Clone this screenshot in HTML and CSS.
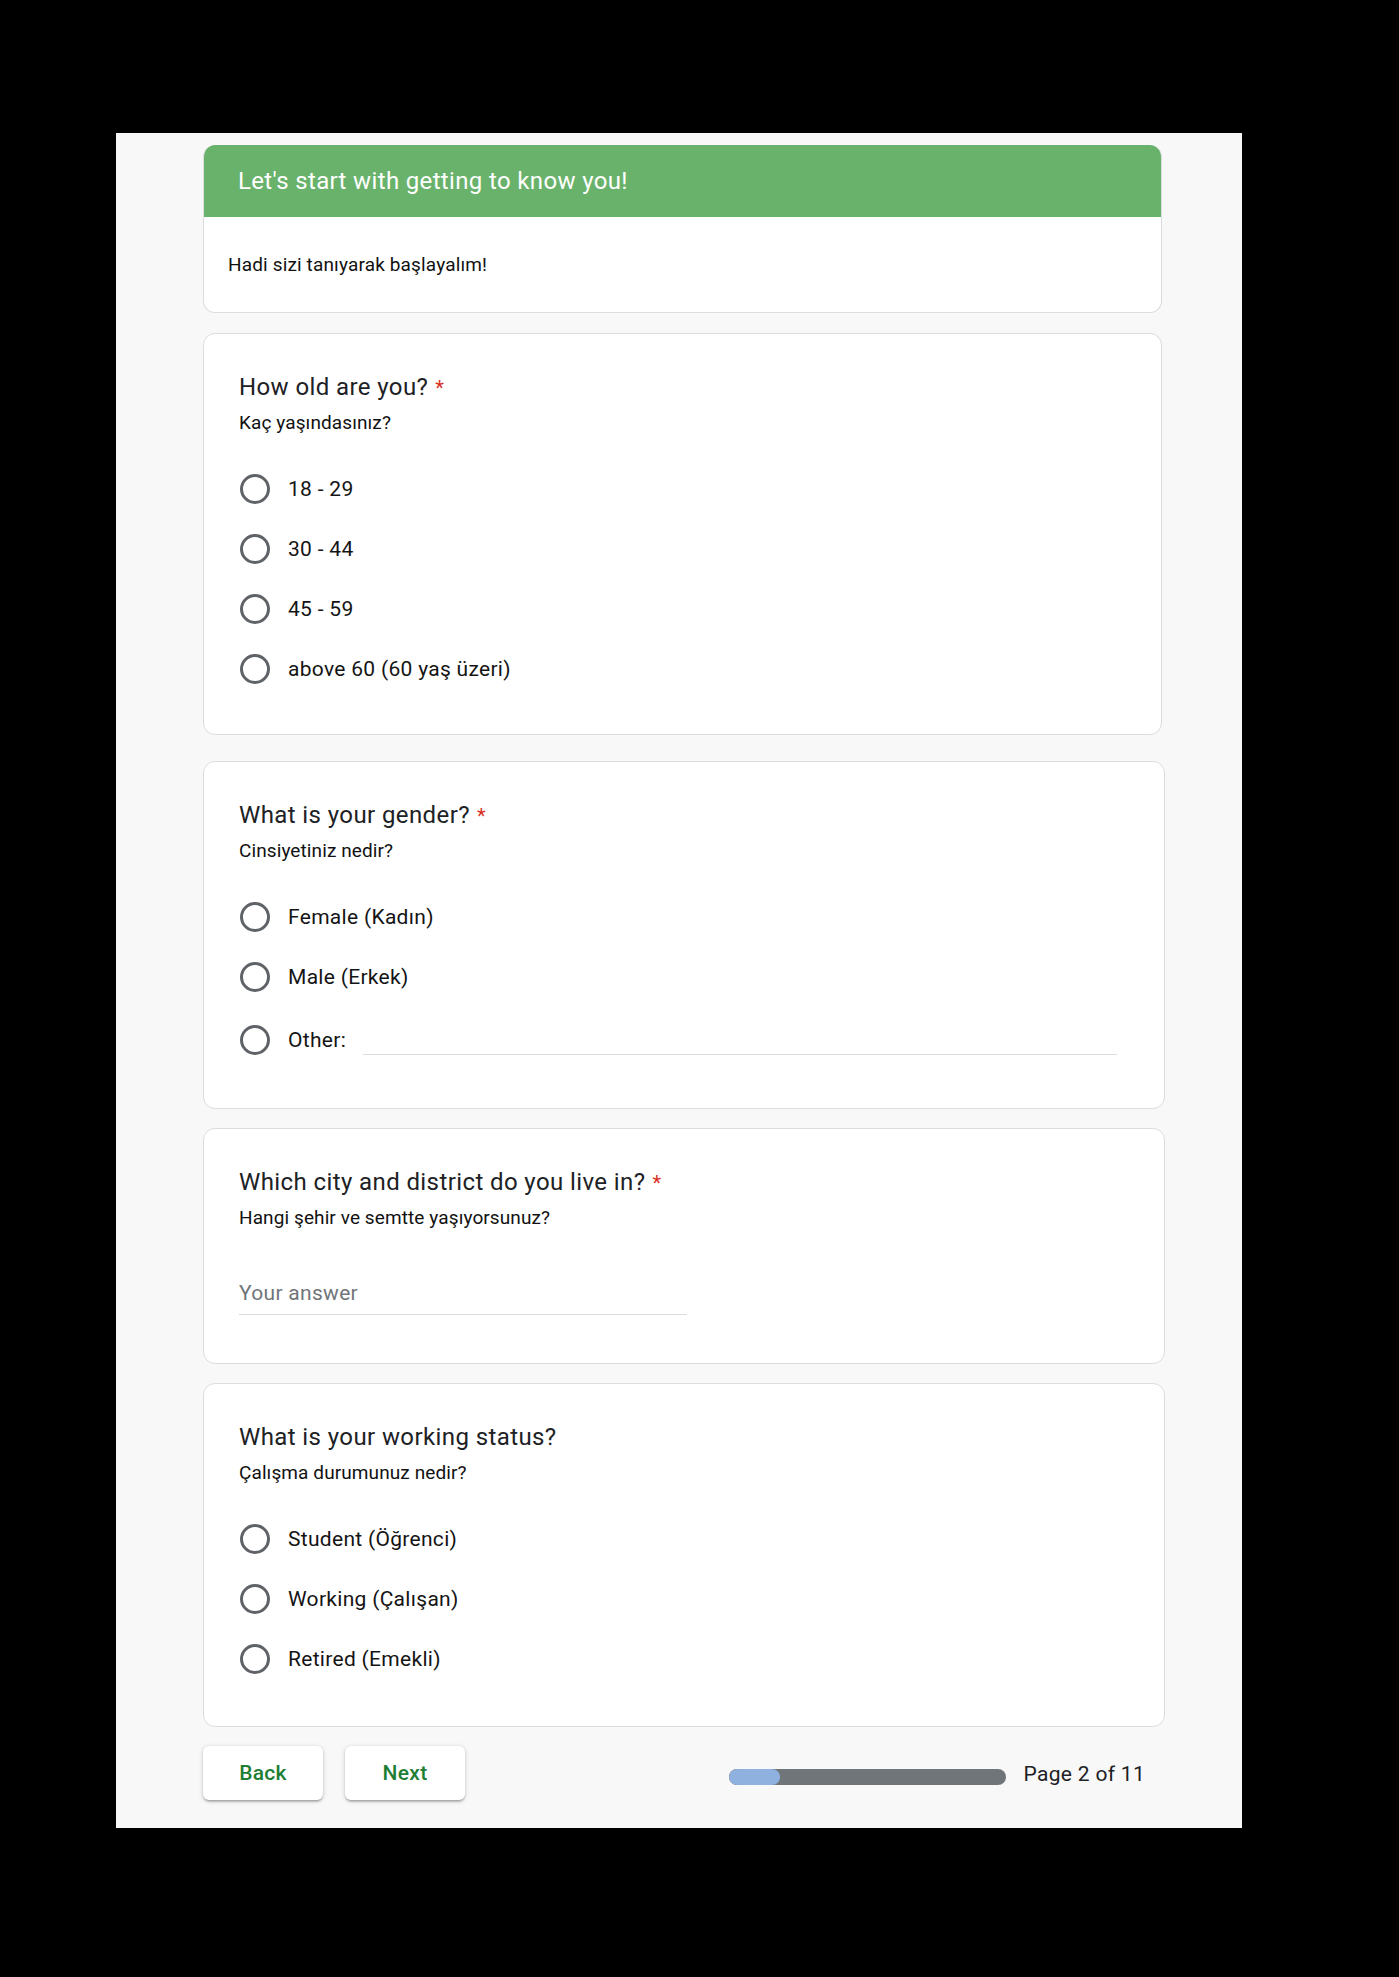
FILE: index.html
```html
<!DOCTYPE html>
<html lang="en">
<head>
<meta charset="utf-8">
<title>Let's start with getting to know you!</title>
<link rel="stylesheet" href="styles.css">
</head>
<body>
<div class="page">
  <main class="panel">
    <section class="card header-card">
      <div class="header-band">Let's start with getting to know you!</div>
      <div class="header-body">Hadi sizi tanıyarak başlayalım!</div>
    </section>

    <section class="card q-card q-gap-lg">
      <div class="q-title">How old are you?<span class="req">*</span></div>
      <div class="q-desc">Kaç yaşındasınız?</div>
      <div class="radio-group">
        <div class="radio-row"><span class="radio"></span><span class="radio-label">18 - 29</span></div>
        <div class="radio-row"><span class="radio"></span><span class="radio-label">30 - 44</span></div>
        <div class="radio-row"><span class="radio"></span><span class="radio-label">45 - 59</span></div>
        <div class="radio-row"><span class="radio"></span><span class="radio-label">above 60 (60 yaş üzeri)</span></div>
      </div>
    </section>

    <section class="card q-card card-wide">
      <div class="q-title">What is your gender?<span class="req">*</span></div>
      <div class="q-desc">Cinsiyetiniz nedir?</div>
      <div class="radio-group">
        <div class="radio-row"><span class="radio"></span><span class="radio-label">Female (Kadın)</span></div>
        <div class="radio-row"><span class="radio"></span><span class="radio-label">Male (Erkek)</span></div>
        <div class="radio-row radio-row-other"><span class="radio"></span><span class="radio-label">Other:</span><span class="other-input"></span></div>
      </div>
    </section>

    <section class="card q-card card-wide">
      <div class="q-title">Which city and district do you live in?<span class="req">*</span></div>
      <div class="q-desc">Hangi şehir ve semtte yaşıyorsunuz?</div>
      <div class="text-answer">Your answer</div>
    </section>

    <section class="card q-card card-wide card-last">
      <div class="q-title">What is your working status?</div>
      <div class="q-desc">Çalışma durumunuz nedir?</div>
      <div class="radio-group">
        <div class="radio-row"><span class="radio"></span><span class="radio-label">Student (Öğrenci)</span></div>
        <div class="radio-row"><span class="radio"></span><span class="radio-label">Working (Çalışan)</span></div>
        <div class="radio-row"><span class="radio"></span><span class="radio-label">Retired (Emekli)</span></div>
      </div>
    </section>

    <div class="footer">
      <button class="btn" type="button">Back</button>
      <button class="btn" type="button">Next</button>
      <div class="progress">
        <div class="progress-bar"><div class="progress-fill" style="width: 51px"></div></div>
        <span class="progress-text">Page 2 of 11</span>
      </div>
    </div>
  </main>
</div>
</body>
</html>
```

FILE: styles.css
```css
* {
  box-sizing: border-box;
}

html, body {
  margin: 0;
  padding: 0;
  background: #000;
}

body {
  min-height: 1977px;
  font-family: Roboto, "Liberation Sans", Arial, sans-serif;
  color: #202124;
}

.page {
  padding: 133px 0 0 116px;
}

.panel {
  width: 1126px;
  background: #f8f8f8;
  padding: 12px 0 28px 87px;
  display: flex;
  flex-direction: column;
  gap: 19px;
}

.card {
  width: 959px;
  background: #fff;
  border: 1px solid #dadce0;
  border-radius: 12px;
}

.card-wide {
  width: 962px;
}

.header-card {
  border-top: none;
  overflow: hidden;
  margin-bottom: 1px;
}

.header-band {
  height: 72px;
  background: #69b26b;
  color: #fff;
  font-size: 24px;
  letter-spacing: 0.35px;
  line-height: 72px;
  padding-left: 34px;
}

.header-body {
  height: 95px;
  line-height: 95px;
  padding-left: 24px;
  font-size: 19px;
  letter-spacing: 0.15px;
  color: #111;
}

.q-card {
  padding: 35px 35px 35px 35px;
}

.q-gap-lg {
  margin-bottom: 7px;
}

.card-last {
  padding-bottom: 37px;
}

.q-title {
  height: 36px;
  font-size: 24px;
  line-height: 36px;
  letter-spacing: 0.4px;
  color: #202124;
}

.req {
  color: #d93025;
  margin-left: 7px;
  font-size: 20px;
}

.q-desc {
  height: 36px;
  font-size: 19px;
  line-height: 36px;
  letter-spacing: 0.1px;
  color: #111;
}

.radio-group {
  margin-top: 18px;
  display: flex;
  flex-direction: column;
}

.radio-row {
  height: 60px;
  display: flex;
  align-items: center;
}

.radio-row-other {
  height: 66px;
}

.radio {
  width: 30px;
  height: 30px;
  border: 3px solid #5f6368;
  border-radius: 50%;
  flex: 0 0 auto;
  margin-left: 1px;
}

.radio-label {
  margin-left: 18px;
  font-size: 21px;
  letter-spacing: 0.3px;
  color: #141414;
}

.other-input {
  flex: 1;
  height: 30px;
  margin-left: 17px;
  margin-right: 12px;
  border-bottom: 1px solid #dadce0;
}

.text-answer {
  margin-top: 36px;
  margin-bottom: 13px;
  width: 448px;
  height: 43px;
  line-height: 42px;
  font-size: 21px;
  letter-spacing: 0.3px;
  color: #70757a;
  border-bottom: 1px solid #dadce0;
}

.footer {
  width: 962px;
  height: 54px;
  display: flex;
  align-items: center;
  gap: 22px;
}

.btn {
  width: 120px;
  height: 54px;
  border: none;
  border-radius: 6px;
  background: #fff;
  color: #1e7e34;
  font-family: Roboto, "Liberation Sans", Arial, sans-serif;
  font-size: 21px;
  font-weight: 500;
  letter-spacing: 0.3px;
  box-shadow: 0 1px 2px 0 rgba(0, 0, 0, 0.16), 0 3px 2px -1px rgba(0, 0, 0, 0.14), 0 1px 5px 0 rgba(0, 0, 0, 0.16);
  padding: 0;
}

.progress {
  margin-left: auto;
  padding-right: 20px;
  padding-top: 8px;
  display: flex;
  align-items: center;
}

.progress-bar {
  width: 277px;
  height: 16px;
  border-radius: 8px;
  background: #70757a;
  overflow: hidden;
}

.progress-fill {
  height: 100%;
  background: #8eb1df;
  border-radius: 8px;
}

.progress-text {
  margin-left: 18px;
  font-size: 21px;
  letter-spacing: 0.3px;
  color: #202124;
  line-height: 1;
  margin-top: -6px;
}
```
